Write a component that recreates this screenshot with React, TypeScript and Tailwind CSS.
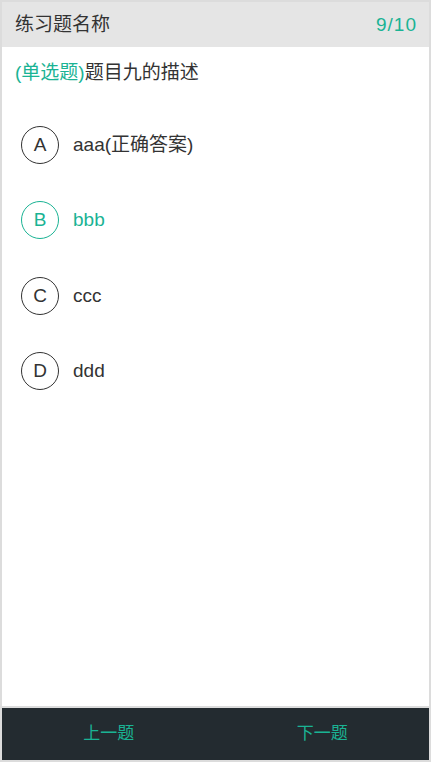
import React from 'react';

const options = [
  { key: 'A', text: 'aaa(正确答案)' },
  { key: 'B', text: 'bbb' },
  { key: 'C', text: 'ccc' },
  { key: 'D', text: 'ddd' },
];

const font = { fontFamily: '"Liberation Sans", "Noto Sans CJK SC", sans-serif' };

export default function App() {
  const selected = 'B';

  return (
    <div
      className="h-[762px] w-[431px] border-2 border-[#dcdcdc] bg-white flex flex-col text-[#333]"
      style={font}
    >
      <div className="h-[45px] bg-[#e5e5e5] flex items-center justify-between px-[13px] pt-[1px] text-[19px]">
        <span className="text-[#333]">练习题名称</span>
        <span className="text-[#1ab394] tracking-[1px] mr-[-1px]">9/10</span>
      </div>

      <div className="flex-1">
        <div className="px-[13px] pt-[14px] text-[19px] leading-6">
          <span className="text-[#1ab394]">(单选题)</span>
          <span>题目九的描述</span>
        </div>
        <ul className="mt-[22px]">
          {options.map((o) => {
            const active = o.key === selected;
            return (
              <li key={o.key} className="h-[75.5px] flex items-center pl-[19px]">
                <div
                  className={`w-[38px] h-[38px] rounded-full border flex items-center justify-center text-[19px] ${
                    active ? 'border-[#1ab394] text-[#1ab394]' : 'border-[#333] text-[#333]'
                  }`}
                >
                  {o.key}
                </div>
                <span className={`ml-[14px] text-[19px] ${active ? 'text-[#1ab394]' : 'text-[#333]'}`}>
                  {o.text}
                </span>
              </li>
            );
          })}
        </ul>
      </div>

      <div className="h-[54px] border-t-2 border-[#dcdcdc] bg-[#232b30] flex text-[17px] text-[#1ab394]">
        <button className="flex-1 flex items-center justify-center">上一题</button>
        <button className="flex-1 flex items-center justify-center">下一题</button>
      </div>
    </div>
  );
}
